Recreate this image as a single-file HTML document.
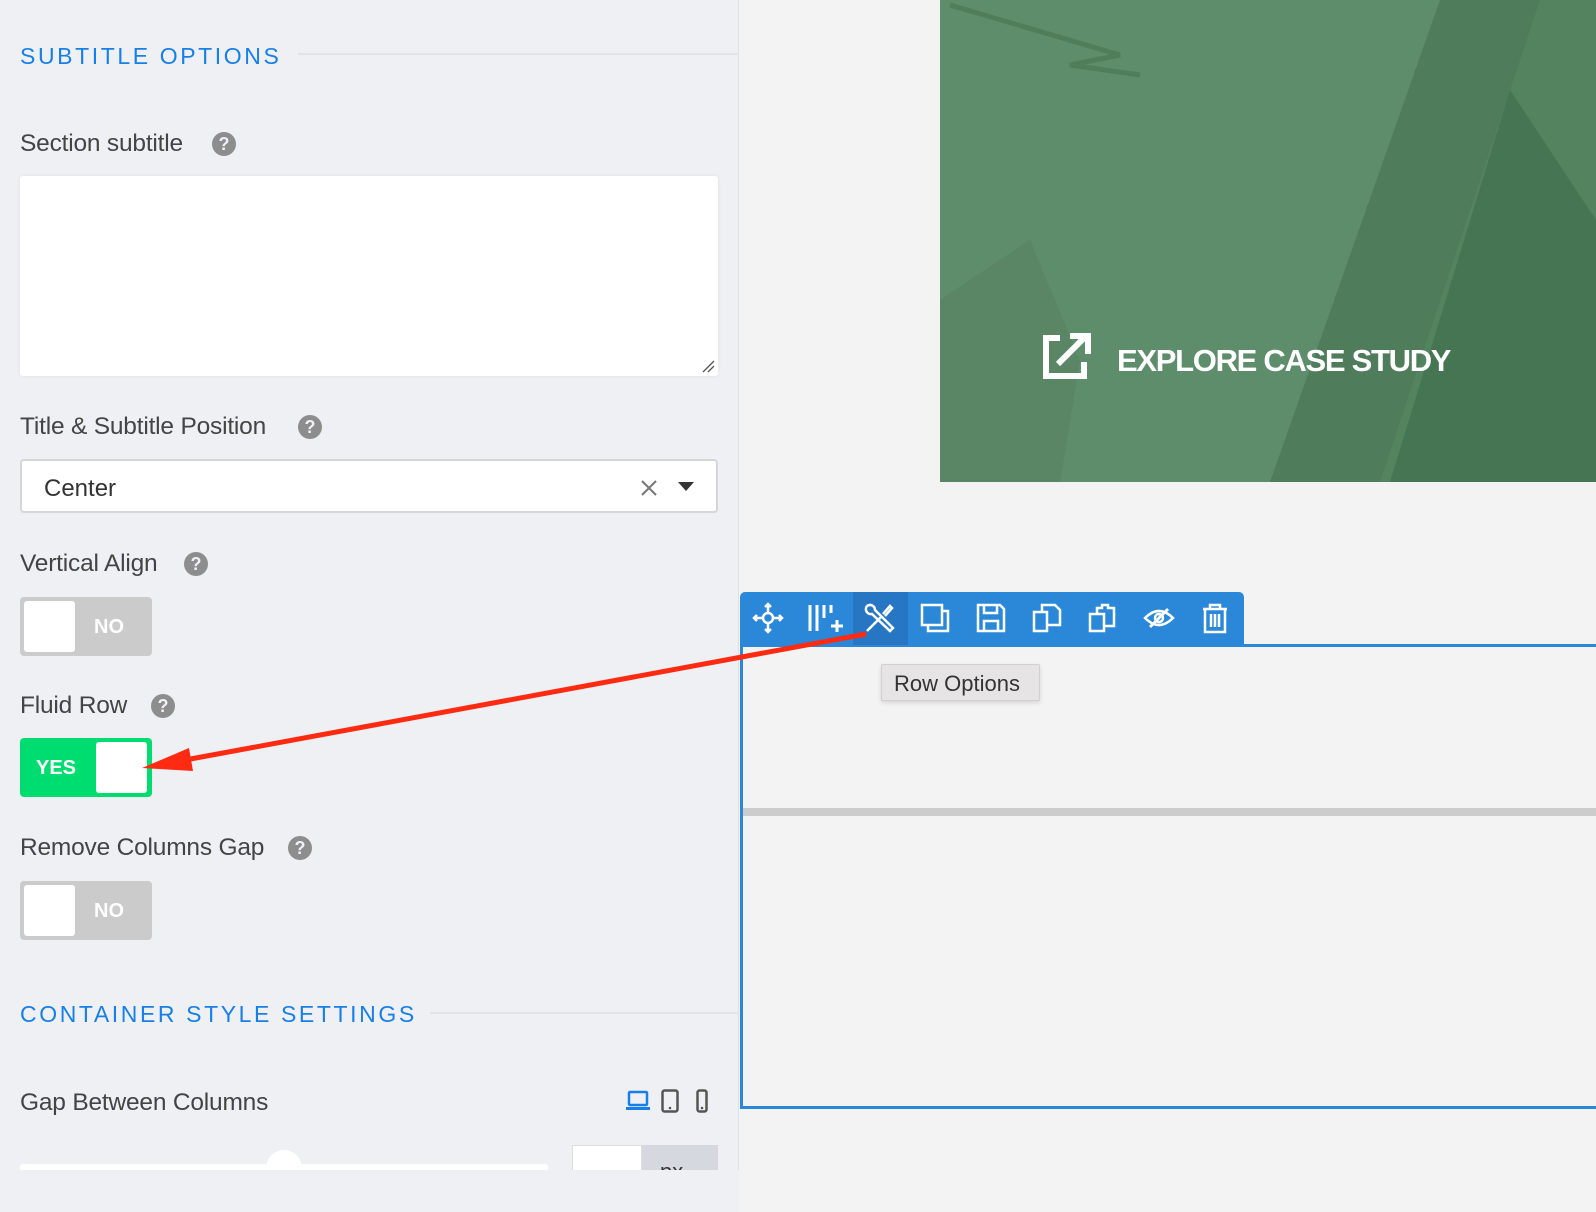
<!DOCTYPE html>
<html><head><meta charset="utf-8"><style>
*{box-sizing:border-box;margin:0;padding:0}
body{width:1596px;height:1212px;position:relative;overflow:hidden;background:#f3f3f3;font-family:"Liberation Sans",sans-serif}
.a{position:absolute}
#left{left:0;top:0;width:739px;height:1212px;background:#eff0f4;border-right:1px solid #e0e1e5}
.h{color:#1680e8;font-size:23px;letter-spacing:2.6px;line-height:1}
.l{color:#444;font-size:24.5px;line-height:1;letter-spacing:-.2px}
.q{width:24px;height:24px;border-radius:50%;background:#8d8d8d;color:#eff0f4;font-weight:bold;font-size:18px;text-align:center;line-height:24px}
.tg{width:132px;height:59px;border-radius:4px;background:#cbcbcb}
.tg .k{position:absolute;top:4px;width:51px;height:51px;border-radius:3px;background:#fff}
.tg span{position:absolute;color:#fff;font-weight:bold;font-size:20px;top:19px}
</style></head><body>
<div id="left" class="a">
<div class="a h" style="left:20px;top:45px">SUBTITLE OPTIONS</div>
<div class="a" style="left:298px;top:53px;width:441px;height:2px;background:#e2e3e7"></div>
<div class="a l" style="left:20px;top:132px">Section subtitle</div>
<div class="a q" style="left:212px;top:132px">?</div>
<div class="a" style="left:20px;top:176px;width:698px;height:200px;background:#fff;border-radius:3px;box-shadow:0 0 4px rgba(0,0,0,.06)">
<svg class="a" style="right:3px;bottom:3px" width="14" height="14"><path d="M2 13L13 2M7 13L13 7" stroke="#555" stroke-width="1.3"/></svg></div>
<div class="a l" style="left:20px;top:415px">Title &amp; Subtitle Position</div>
<div class="a q" style="left:298px;top:415px">?</div>
<div class="a" style="left:20px;top:459px;width:698px;height:54px;background:#fff;border:2px solid #d6d6d6;border-radius:4px"></div>
<div class="a" style="left:44px;top:475px;font-size:24px;color:#333">Center</div>
<svg class="a" style="left:640px;top:479px" width="18" height="18"><path d="M2 2L16 16M16 2L2 16" stroke="#777" stroke-width="2"/></svg>
<svg class="a" style="left:678px;top:482px" width="16" height="10"><path d="M0 0H16L8 9Z" fill="#333"/></svg>
<div class="a l" style="left:20px;top:552px">Vertical Align</div>
<div class="a q" style="left:184px;top:552px">?</div>
<div class="a tg" style="left:20px;top:597px"><div class="k" style="left:4px"></div><span style="left:74px">NO</span></div>
<div class="a l" style="left:20px;top:694px">Fluid Row</div>
<div class="a q" style="left:151px;top:694px">?</div>
<div class="a tg" style="left:20px;top:738px;background:#00dd70"><span style="left:16px">YES</span><div class="k" style="left:76px"></div></div>
<div class="a l" style="left:20px;top:836px">Remove Columns Gap</div>
<div class="a q" style="left:288px;top:836px">?</div>
<div class="a tg" style="left:20px;top:881px"><div class="k" style="left:4px"></div><span style="left:74px">NO</span></div>
<div class="a h" style="left:20px;top:1003px">CONTAINER STYLE SETTINGS</div>
<div class="a" style="left:430px;top:1012px;width:309px;height:2px;background:#e2e3e7"></div>
<div class="a l" style="left:20px;top:1091px">Gap Between Columns</div>
<svg class="a" style="left:626px;top:1090px" width="24" height="22"><rect x="3" y="2" width="18" height="13" rx="1" fill="none" stroke="#1680e8" stroke-width="2.5"/><rect x="0" y="17" width="24" height="3" fill="#1680e8"/></svg>
<svg class="a" style="left:661px;top:1089px" width="18" height="24"><rect x="1.5" y="1.5" width="15" height="21" rx="2" fill="none" stroke="#555" stroke-width="2.5"/><circle cx="9" cy="19" r="1.3" fill="#555"/></svg>
<svg class="a" style="left:696px;top:1089px" width="12" height="24"><rect x="1.5" y="1.5" width="9" height="21" rx="2" fill="none" stroke="#555" stroke-width="2.5"/><circle cx="6" cy="19" r="1.3" fill="#555"/></svg>
<div class="a" style="left:20px;top:1164px;width:528px;height:7px;background:#fff;border-radius:3px"></div>
<div class="a" style="left:266px;top:1150px;width:36px;height:36px;border-radius:50%;background:#fff"></div>
<div class="a" style="left:572px;top:1145px;width:70px;height:40px;background:#fff;border:1px solid #ddd"></div>
<div class="a" style="left:642px;top:1145px;width:76px;height:40px;background:#d5d8de;font-size:22px;color:#333;padding:14px 0 0 18px">px⌄</div>
<div class="a" style="left:0;top:1170px;width:739px;height:42px;background:#eff0f4"></div>
</div>

<div class="a" style="left:940px;top:0;width:656px;height:482px;background:#5e8d6c;overflow:hidden">
<svg class="a" style="left:0;top:0" width="656" height="482">
<path d="M330 482L500 0H656V482Z" fill="#4f7d5b"/>
<path d="M440 482L600 0H656V482Z" fill="#5a8a66" opacity=".5"/>
<path d="M450 482L570 90L656 220V482Z" fill="#467554"/>
<path d="M0 300L90 240L140 360L120 482H0Z" fill="#557f60" opacity=".5"/>
<path d="M10 5L180 55L130 65L200 75" stroke="#4c7a58" stroke-width="5" fill="none" opacity=".8"/>
</svg>
<svg class="a" style="left:102px;top:330px" width="50" height="50"><path d="M18 8H4V46H42V32" fill="none" stroke="#fff" stroke-width="6"/><path d="M16 34L42 8M28 6H46V24" fill="none" stroke="#fff" stroke-width="6"/></svg>
<div class="a" style="left:177px;top:343px;color:#fff;font-size:31px;font-weight:bold;letter-spacing:-1.3px">EXPLORE CASE STUDY</div>
</div>

<div class="a" style="left:740px;top:644px;width:860px;height:465px;border:3px solid #2b88d8;border-right:none"></div>
<div class="a" style="left:743px;top:808px;width:853px;height:8px;background:#ccc"></div>
<div class="a" style="left:740px;top:592px;width:504px;height:53px;background:#2b88d8;border-radius:5px 5px 0 0">
<div class="a" style="left:113px;top:0;width:55px;height:53px;background:#2776c3"></div>
<svg class="a" style="left:0;top:0" width="504" height="53" fill="none" stroke="#fff" stroke-width="2.5">
<g transform="translate(28,26)"><circle r="5"/><path d="M-14 0H-5M5 0H14M0-14V-5M0 5V14M-11-3L-14 0L-11 3M11-3L14 0L11 3M-3-11L0-14L3-11M-3 11L0 14L3 11"/></g>
<g transform="translate(83,26)"><path d="M-13-13V13M-6-13V13M1-13V0M8-13V-5M14 2V14M8 8H20" stroke-width="3"/></g>
<g transform="translate(139,26)"><path d="M-12 13L2-1M-12-12A5 5 0 0 0 -7-4L11 13L14 10L-4-8A5 5 0 0 0 -12-12M4-4L11-12L13-10L6-2"/></g>
<g transform="translate(195,26)"><rect x="-13" y="-13" width="20" height="20"/><path d="M7-7H13V13H-7V7"/></g>
<g transform="translate(251,26)"><path d="M-13-13H9L13-9V13H-13Z M-7-13V-5H6V-13 M-7 13V3H7V13"/></g>
<g transform="translate(307,26)"><path d="M-13-6H0V13H-13Z M-5-6V-13H8L13-8V7H0"/></g>
<g transform="translate(363,26)"><path d="M-13-4H1V13H-13Z M-6-4V-10H-1V-13H5V-10H11V8H1 M-6-4"/></g>
<g transform="translate(419,26)"><path d="M-14 0Q0-14 14 0Q0 14-14 0Z"/><circle r="4"/><path d="M-9 9L9-9" stroke-width="3"/></g>
<g transform="translate(475,26)"><path d="M-12-9H12M-5-9V-13H5V-9M-10-9V14H10V-9M-4-4V9M0-4V9M4-4V9"/></g>
</svg>
</div>
<div class="a" style="left:881px;top:664px;width:159px;height:37px;background:#e6e4e4;border:1px solid #d2d0d0;border-radius:2px;box-shadow:0 2px 4px rgba(0,0,0,.12);font-size:22px;color:#333;padding:6px 0 0 12px">Row Options</div>

<svg class="a" style="left:0;top:0;pointer-events:none" width="1596" height="1212">
<path d="M866 634L185 760" stroke="#ff2a12" stroke-width="5"/>
<path d="M142 768L189 748L193 771Z" fill="#ff2a12"/>
</svg>
</body></html>
